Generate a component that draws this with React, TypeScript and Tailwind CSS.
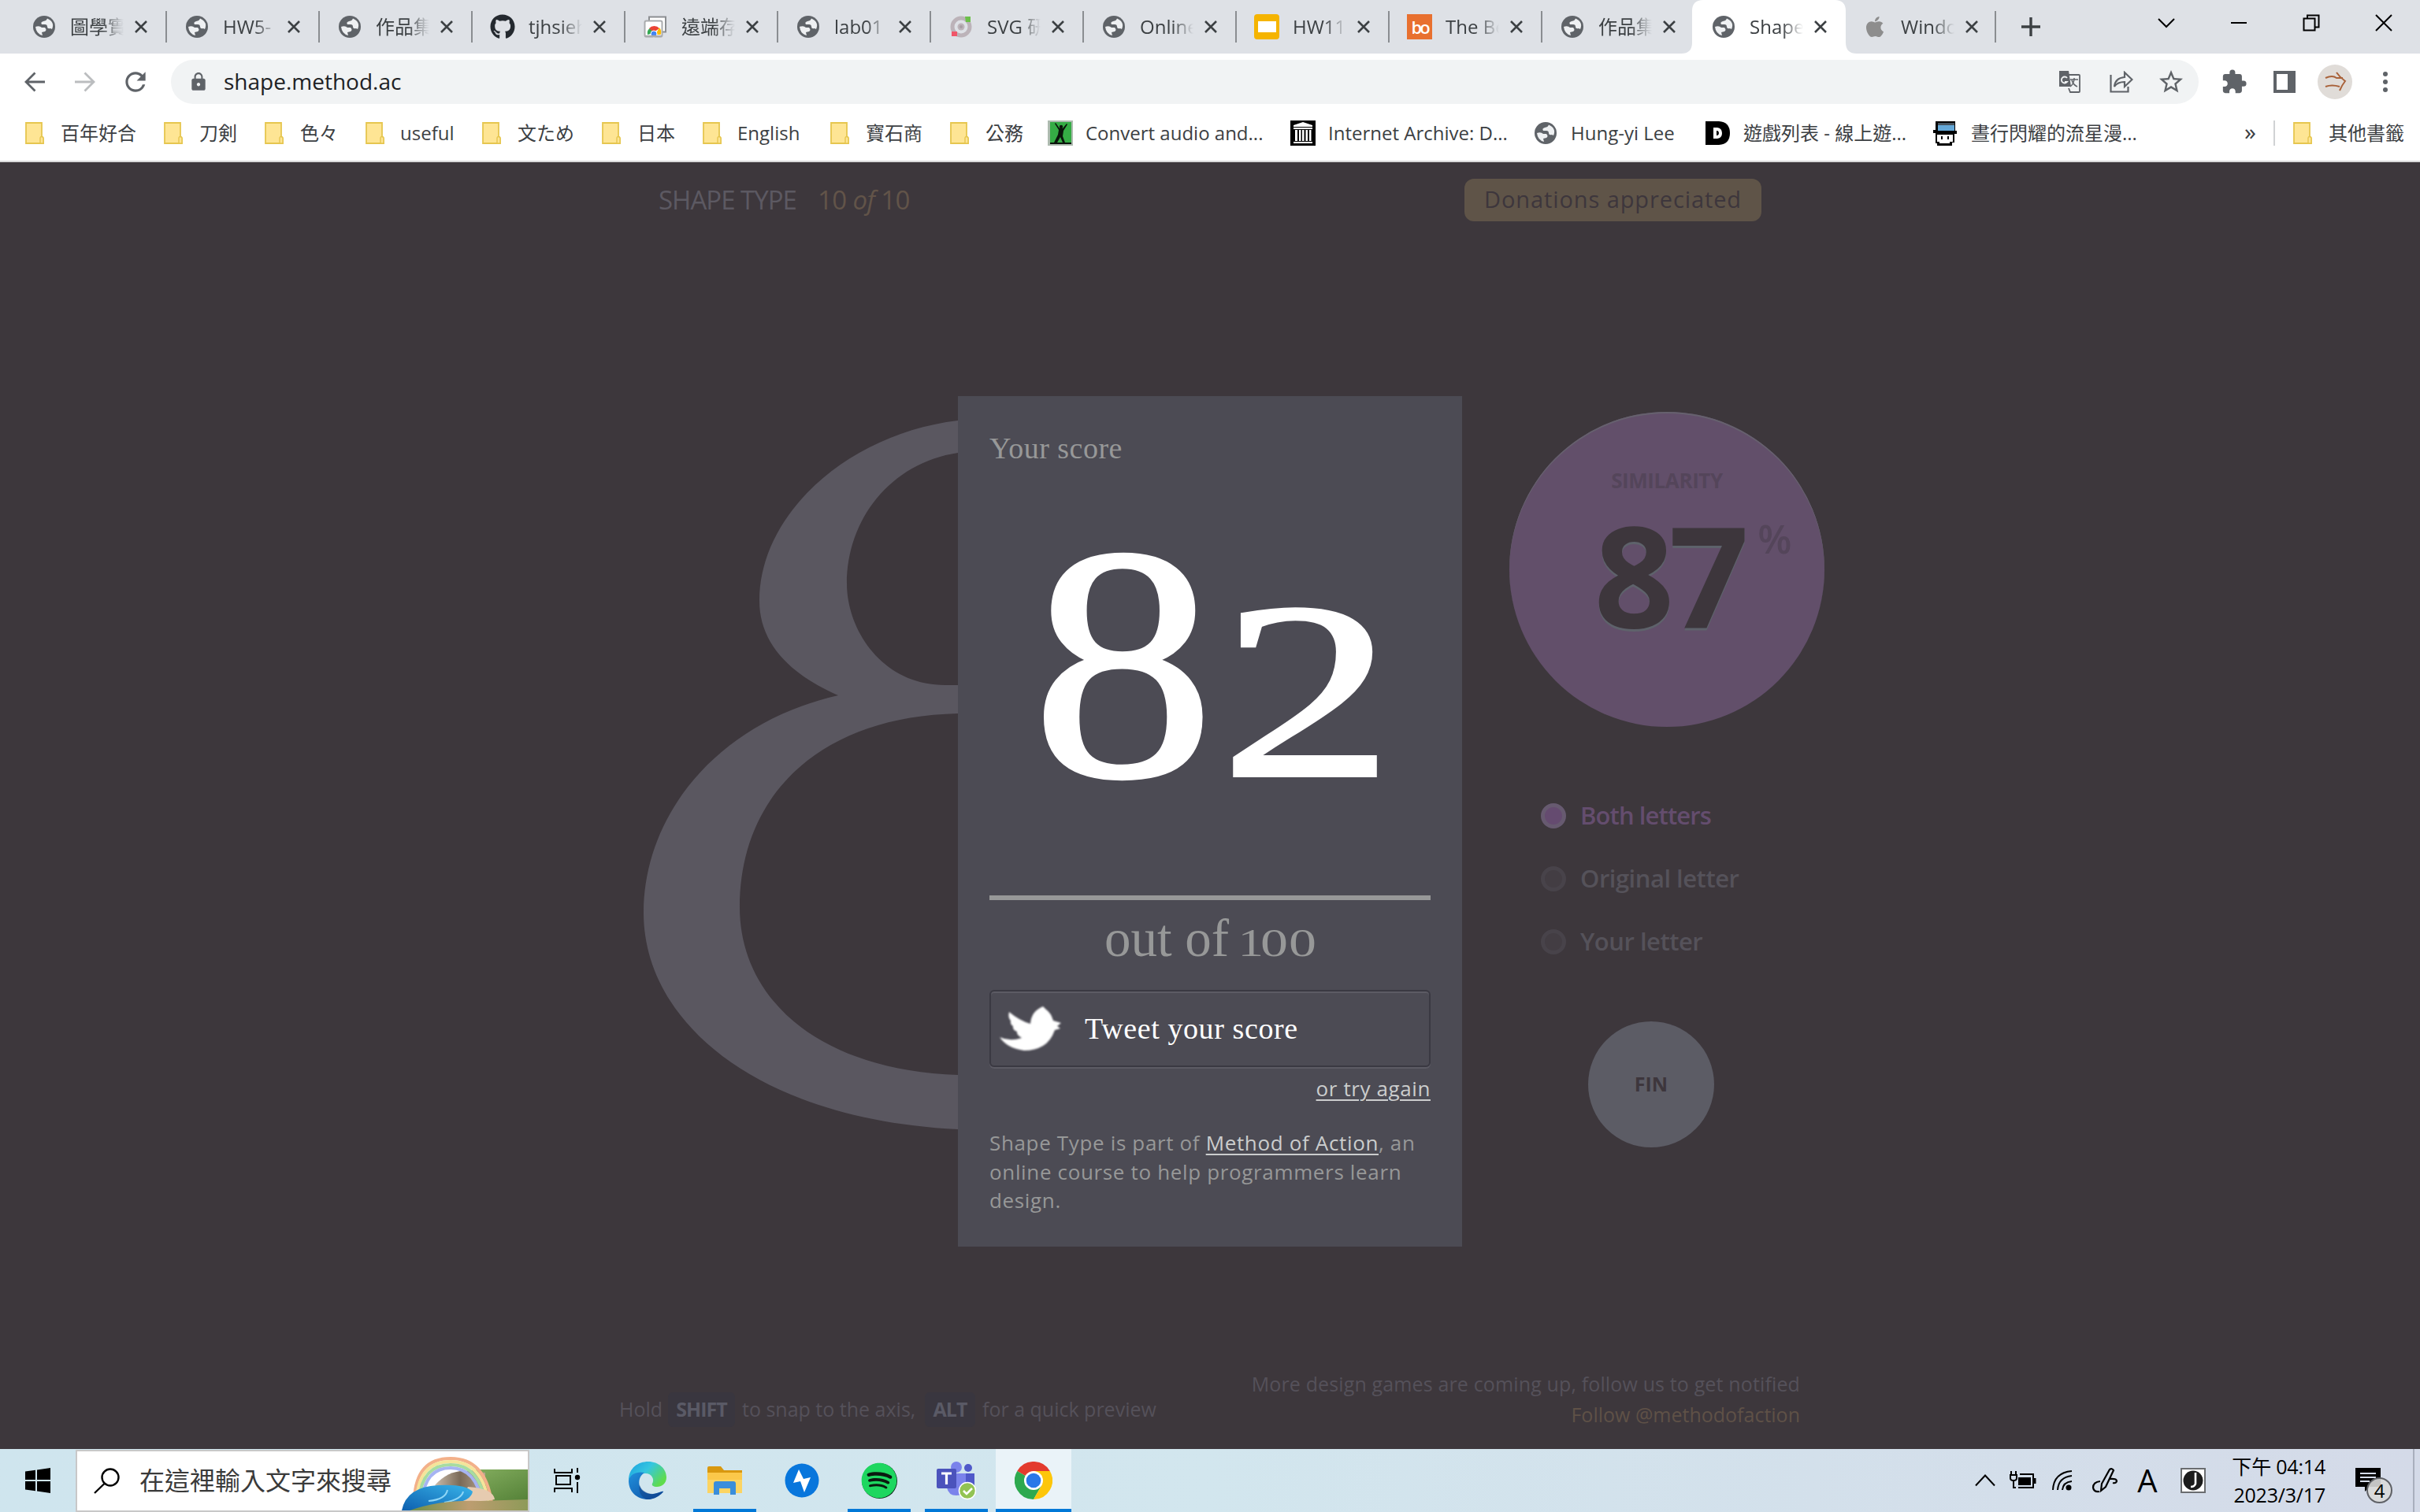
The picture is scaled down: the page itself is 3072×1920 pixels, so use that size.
import type { ReactNode } from "react";
import { FaApple, FaGithub, FaSpotify } from "react-icons/fa";
import { MdExtension, MdLock, MdRefresh, MdStarBorder } from "react-icons/md";

/* ---------- small icons ---------- */

const Globe = () => (
  <svg viewBox="0 0 28 28" className="size-[28px]">
    <circle cx="14" cy="14" r="14" fill="#5f6368" />
    <path d="M3 14q5-2 8 1h4q3 3 0 5l-4 1 1 4Q4 23 3 14z" fill="#eef0f2" />
    <path d="M18 3.500q-1 3-5 3.500-4 1-2 4h4q3 0 3 3t4 2l2 1q4-9-6-13.500z" fill="#eef0f2" />
  </svg>
);

const Cross = () => (
  <svg viewBox="0 0 16 16" className="size-[16px]" fill="none" stroke="#3c4043" strokeWidth="2.6">
    <path d="M1 1 15 15M15 1 1 15" />
  </svg>
);

const Folder = () => (
  <svg viewBox="0 0 24 28" className="h-[28px] w-[24px]">
    <path d="M1 1h20v17q2 1 2 3v6H1z" fill="#fee594" stroke="#e6c64f" strokeWidth="1.8" />
    <path d="M23 20q-3-3-4 0v7h4z" fill="#fee594" stroke="#e6c64f" strokeWidth="1.4" />
  </svg>
);

const RemoteIcon = () => (
  <svg viewBox="0 0 30 28" className="h-[28px] w-[30px]">
    <path d="M7 6V1.5h21v19h-4" fill="#fff" stroke="#8b8e91" strokeWidth="2" />
    <rect x="1.5" y="6.500" width="22" height="20" rx="2" fill="#fff" stroke="#a9abad" strokeWidth="2" />
    <path d="M5 24a8.500 8.500 0 0 1 4-9l4 7z" fill="#34a853" />
    <path d="M7 16a8.500 8.500 0 0 1 13 0l-7 5z" fill="#ea4335" />
    <path d="M20 15a8.500 8.500 0 0 1 1.500 9H15z" fill="#fbbc05" />
    <circle cx="13" cy="23" r="4" fill="#4285f4" stroke="#fff" />
    <path d="M1.500 26h22" stroke="#a9abad" strokeWidth="2.500" />
  </svg>
);

const TargetIcon = () => (
  <svg viewBox="0 0 28 28" className="size-[28px]">
    <circle cx="14" cy="14" r="11" fill="none" stroke="#bcb3b9" strokeWidth="5" />
    <circle cx="14" cy="14" r="4.500" fill="#bcb3b9" />
    <circle cx="14" cy="14" r="2" fill="#a79da4" />
    <path d="M19 1h7v7h-6z" fill="#6cc04a" />
    <path d="M2 20h7v6H2z" fill="#f0566a" />
  </svg>
);

const SlidesIcon = () => (
  <div className="flex size-[32px] items-center justify-center rounded-[4px] bg-[#f5b400]">
    <div className="h-[14px] w-[23px] bg-white" />
  </div>
);

const BoIcon = () => (
  <div className="flex size-[32px] items-center justify-center bg-[#e8702f] font-['Open_Sans',sans-serif] text-[22px] leading-none font-semibold tracking-[-3px] text-white">
    bo
  </div>
);

const AudioIcon = () => (
  <svg viewBox="0 0 32 32" className="size-[32px]">
    <path d="M0 0h32v32H0z" fill="#aebbb0" />
    <path d="M3 2h27v28H3z" fill="#35ac45" />
    <path d="M3 28h27v2H3zM15 10q2-1 4 0l5-6 1 1-5 8-1 7 3 8h-3l-3-7-4 7H8l5-10 1-6-5-8 1-1z" fill="#0a140b" />
    <circle cx="17" cy="8" r="2.200" fill="#0a140b" />
  </svg>
);

const ArchiveIcon = () => (
  <svg viewBox="0 0 32 32" className="size-[32px]">
    <path d="M0 0h32v32H0z" fill="#000" />
    <path d="M16 2 28 6v2H4V6zM4 9h24v2H4zM4 27h24v2H4zM6 12h3v14H6zM11 12h2.500v14H11zM15 12h2.500v14H15zM19.500 12H22v14h-2.500zM24 12h2.500v14H24z" fill="#fff" />
  </svg>
);

const DIcon = () => (
  <svg viewBox="0 0 31 30" className="h-[30px] w-[31px]">
    <path d="M0 0h17q14 1 14 15T17 30H0z" fill="#000" />
    <path d="M10 8h5q6 1 6 7t-6 7h-5z" fill="#fff" />
    <path d="M14 12h1q2 .5 2 3t-2 3h-1z" fill="#000" />
  </svg>
);

const MinerIcon = () => (
  <svg viewBox="0 0 32 32" className="size-[32px]">
    <path d="M4 1h25v12h2v4h-3v11h-3v4H6v-3H4V16H1v-4h3z" fill="#000" />
    <path d="M7 3h21v10H7z" fill="#64a8d8" />
    <path d="M7 3h21v3H7z" fill="#46535e" />
    <path d="M6 18h20v9h-4v2H9v-2H6z" fill="#fff" />
    <path d="M11 20h2v4h-2zM19 20h2v4h-2z" fill="#000" />
  </svg>
);

/* ---------- browser ---------- */

type Tab = { title: string; icon: ReactNode; width: string; active?: boolean; bare?: boolean };

const tabs: Tab[] = [
  { title: "圖學實", icon: <Globe />, width: "w-[194px]" },
  { title: "HW5-", icon: <Globe />, width: "w-[194px]" },
  { title: "作品集", icon: <Globe />, width: "w-[194px]" },
  { title: "tjhsieh", icon: <FaGithub className="size-[32px] text-[#24292f]" />, width: "w-[194px]" },
  { title: "遠端存", icon: <RemoteIcon />, width: "w-[194px]" },
  { title: "lab01", icon: <Globe />, width: "w-[194px]" },
  { title: "SVG 研", icon: <TargetIcon />, width: "w-[194px]" },
  { title: "Online", icon: <Globe />, width: "w-[194px]" },
  { title: "HW11", icon: <SlidesIcon />, width: "w-[194px]" },
  { title: "The Be", icon: <BoIcon />, width: "w-[194px]" },
  { title: "作品集", icon: <Globe />, width: "w-[192px]", bare: true },
  { title: "Shape", icon: <Globe />, width: "w-[192px]", active: true },
  { title: "Windo", icon: <FaApple className="size-[30px] text-[#8d8d8d]" />, width: "w-[192px]" },
];

function TabItem({ tab }: { tab: Tab }) {
  return (
    <div className={`relative flex h-[68px] shrink-0 items-center ${tab.width}`}>
      {tab.active && (
        <svg viewBox="0 0 223 68" className="absolute top-0 left-[-16px] h-[68px] w-[223px]">
          <path d="M0 68q14 0 14-14V14Q14 0 28 0h167q14 0 14 14v40q0 14 14 14z" fill="#fff" />
        </svg>
      )}
      <div className="relative ml-[20px] flex w-[36px] justify-center">{tab.icon}</div>
      <div className="relative ml-[15px] w-[68px] overflow-hidden text-[24px] whitespace-nowrap text-[#3c4043] [mask-image:linear-gradient(to_right,#000_60%,transparent)]">
        {tab.title}
      </div>
      <div className="relative ml-[14px]">
        <Cross />
      </div>
      {!tab.active && !tab.bare && <div className="ml-auto h-[40px] w-[2px] bg-[#8a8d91]" />}
    </div>
  );
}

type Bookmark = { label: string; icon: ReactNode; width: string; gap: string };

const bookmarks: Bookmark[] = [
  { label: "百年好合", icon: <Folder />, width: "w-[176px]", gap: "gap-[21px]" },
  { label: "刀剣", icon: <Folder />, width: "w-[128px]", gap: "gap-[21px]" },
  { label: "色々", icon: <Folder />, width: "w-[128px]", gap: "gap-[21px]" },
  { label: "useful", icon: <Folder />, width: "w-[148px]", gap: "gap-[20px]" },
  { label: "文ため", icon: <Folder />, width: "w-[152px]", gap: "gap-[21px]" },
  { label: "日本", icon: <Folder />, width: "w-[128px]", gap: "gap-[21px]" },
  { label: "English", icon: <Folder />, width: "w-[162px]", gap: "gap-[20px]" },
  { label: "寶石商", icon: <Folder />, width: "w-[152px]", gap: "gap-[21px]" },
  { label: "公務", icon: <Folder />, width: "w-[124px]", gap: "gap-[21px]" },
  { label: "Convert audio and...", icon: <AudioIcon />, width: "w-[308px]", gap: "gap-[16px]" },
  { label: "Internet Archive: D...", icon: <ArchiveIcon />, width: "w-[310px]", gap: "gap-[16px]" },
  { label: "Hung-yi Lee", icon: <Globe />, width: "w-[217px]", gap: "gap-[18px]" },
  { label: "遊戲列表 - 線上遊...", icon: <DIcon />, width: "w-[288px]", gap: "gap-[17px]" },
  { label: "晝行閃耀的流星漫...", icon: <MinerIcon />, width: "w-[300px]", gap: "gap-[17px]" },
];

function Browser() {
  return (
    <header className="h-[206px] bg-white font-['Open_Sans','Noto_Sans_CJK_TC',sans-serif]">
      <div className="flex h-[68px] bg-[#dee1e6] pl-[18px]">
        {tabs.map((t, i) => (
          <TabItem key={i} tab={t} />
        ))}
        <svg viewBox="0 0 24 24" className="mt-[22px] ml-[32px] size-[24px] shrink-0" stroke="#3c4043" strokeWidth="3.400">
          <path d="M12 0v24M0 12h24" />
        </svg>
        <div className="mr-[35px] ml-auto flex h-[58px] items-center gap-[70px]">
          <svg viewBox="0 0 22 22" className="size-[22px]" fill="none" stroke="#000" strokeWidth="2">
            <path d="m1 6 10 10L21 6" />
          </svg>
          <svg viewBox="0 0 22 22" className="size-[22px]" stroke="#000" strokeWidth="2">
            <path d="M1 11h20" />
          </svg>
          <svg viewBox="0 0 22 22" className="size-[22px]" fill="none" stroke="#000" strokeWidth="2">
            <path d="M1.500 5.500h14v15h-14zM6 5V1.500h14.500v15H16" />
          </svg>
          <svg viewBox="0 0 22 22" className="size-[22px]" stroke="#000" strokeWidth="2">
            <path d="M1 1 21 21M21 1 1 21" />
          </svg>
        </div>
      </div>

      <div className="flex h-[72px] items-center">
        <svg viewBox="0 0 26 26" className="ml-[31px] size-[26px]" fill="none" stroke="#5f6368" strokeWidth="2.800">
          <path d="M26 13H2M13.500 1.500 2 13l11.500 11.500" />
        </svg>
        <svg viewBox="0 0 26 26" className="ml-[38px] size-[26px]" fill="none" stroke="#bbbdbf" strokeWidth="2.800">
          <path d="M0 13h24M12.500 1.500 24 13 12.500 24.500" />
        </svg>
        <MdRefresh className="ml-[32px] size-[38px] text-[#5f6368]" />
        <div className="ml-[26px] flex h-[56px] w-[2574px] items-center rounded-[28px] bg-[#f1f3f4]">
          <MdLock className="ml-[22px] size-[26px] text-[#5f6368]" />
          <span className="ml-[19px] pb-[2px] text-[28px] text-[#202124]">shape.method.ac</span>
          <svg viewBox="0 0 28 28" className="ml-auto size-[28px]">
            <path d="M1 0h12l3 20H1z" fill="#5f6368" />
            <path d="M12 5h14q1 0 1 1v20q0 1-1 1H15l-2-5" fill="none" stroke="#5f6368" strokeWidth="1.800" />
            <path d="M11 9a4 4 0 1 0 0 5H8" fill="none" stroke="#f1f3f4" strokeWidth="1.800" />
            <path d="M15 11h10M20 9v2q-1 6-5 9M17 12q2 6 7 8" fill="none" stroke="#5f6368" strokeWidth="1.500" />
          </svg>
          <svg viewBox="0 0 30 28" className="ml-[37px] h-[28px] w-[30px]" fill="none" stroke="#5f6368" strokeWidth="2.200">
            <path d="M1.500 5v21.500h22V20M6 20q1-11 13-12V2l9.500 9-9.500 9v-6Q10 14 6 20z" />
          </svg>
          <MdStarBorder className="mr-[17px] ml-[30px] size-[36px] text-[#5f6368]" />
        </div>
        <MdExtension className="ml-[28px] size-[34px] text-[#5f6368]" />
        <div className="ml-[33px] flex h-[28px] w-[28px] items-center bg-[#5f6368] pl-[4px]">
          <div className="h-[20px] w-[14px] bg-white" />
        </div>
        <div className="ml-[28px] flex size-[44px] items-center justify-center rounded-full bg-[#e0dcd8]">
          <svg viewBox="0 0 30 26" className="h-[26px] w-[30px]" fill="none" stroke="#a9623a" strokeWidth="2">
            <path d="M3 8q9-4 14 0h8M3 19q8-3 18 0M17 1q4 6 11 11-4 5-7 12" />
          </svg>
        </div>
        <svg viewBox="0 0 8 28" className="ml-[38px] h-[28px] w-[8px]" fill="#5f6368">
          <circle cx="4" cy="4" r="3" />
          <circle cx="4" cy="14" r="3" />
          <circle cx="4" cy="24" r="3" />
        </svg>
      </div>

      <div className="flex h-[66px] items-center border-b-2 border-[#d9d9da] pb-[7px] pl-[32px] text-[24px] whitespace-nowrap text-[#3c4043]">
        {bookmarks.map((b) => (
          <div key={b.label} className={`flex shrink-0 items-center ${b.width} ${b.gap}`}>
            {b.icon}
            <span>{b.label}</span>
          </div>
        ))}
        <span className="ml-[96px] w-[37px] pb-[4px] text-[30px]">»</span>
        <div className="h-[32px] w-[2px] bg-[#d0d2d4]" />
        <div className="ml-[23px] flex items-center gap-[21px]">
          <Folder />
          <span>其他書籤</span>
        </div>
      </div>
    </header>
  );
}

/* ---------- game page ---------- */

const choices = [
  { label: "Both letters", ring: "border-[#675a70] bg-[#654b70]", text: "text-[#644d6e] tracking-[-0.9px]" },
  { label: "Original letter", ring: "border-[#48434a] bg-[#433d43]", text: "text-[#55525a] tracking-[-0.5px]" },
  { label: "Your letter", ring: "border-[#48434a] bg-[#433d43]", text: "text-[#55525a] tracking-[-0.5px]" },
];

function ScoreCard() {
  return (
    <section className="absolute top-[297px] left-[1216px] h-[1080px] w-[640px] bg-[#4c4b54] px-[40px] pt-[46px]">
      <h2 className="h-[40px] font-['Liberation_Serif',serif] text-[38px] leading-[40px] tracking-[0.5px] text-[#979898]">Your score</h2>
      <div className="flex h-[554px] items-baseline border-b-[6px] border-[#979898] pt-[42px] pl-[64px] font-['Liberation_Serif',serif] text-white [-webkit-text-stroke:4px_white]">
        <span className="w-[211px] scale-x-[1.1] text-[423px] leading-none">8</span>
        <span className="ml-[48px] w-[160px] scale-x-[1.38] text-[320px] leading-none">2</span>
      </div>
      <div className="mt-[8px] flex h-[80px] items-baseline justify-center font-['Liberation_Serif',serif] text-[67px] leading-[80px] text-[#979898]">
        <span className="-ml-[4px]">out of</span>
        <span className="ml-[15px] w-[23px] scale-x-[1.3] text-[50px]">1</span>
        <span className="ml-[7px] w-[25px] scale-x-[1.4] text-[50px]">0</span>
        <span className="ml-[11px] w-[25px] scale-x-[1.4] text-[50px]">0</span>
      </div>
      <a className="mt-[26px] flex h-[98px] items-center rounded-[6px] border-2 border-[#3a3942] font-['Liberation_Serif',serif] text-[38px] tracking-[0.6px] text-white shadow-[inset_0_2px_0_#5c5b64,0_2px_0_#5c5b64]">
        <svg viewBox="0 0 84 64" className="ml-[6px] h-[64px] w-[84px] blur-[0.8px]" fill="#fff">
          <path d="M5 43Q18 49 33 44 26 40 27 36 21 34 22 29 18 27 19 22 15 18 17 11 30 22 44 26 45 10 60 4L64 8Q70 12 73 22L83 25 78 29 82 32 75 34Q70 48 60 54 50 60 36 60 14 57 5 43z" />
        </svg>
        <span className="ml-[29px]">Tweet your score</span>
      </a>
      <div className="mt-[9px] text-right text-[26px] leading-[36px] tracking-[0.6px] text-[#cbcdcd]">
        <a className="underline decoration-2 underline-offset-[4px]">or try again</a>
      </div>
      <p className="mt-[33px] text-[26px] leading-[36.5px] tracking-[0.650px] whitespace-nowrap text-[#979898]">
        Shape Type is part of{" "}
        <a className="text-[#cbcdcd] underline decoration-2 underline-offset-[4px]">Method of Action</a>, an
        <br />
        online course to help programmers learn
        <br />
        design.
      </p>
    </section>
  );
}

function Game() {
  return (
    <main className="relative h-[1634px] bg-[#3d373c] pt-[21px] font-['Open_Sans',sans-serif]">
      <div className="flex h-[54px] items-center whitespace-nowrap">
        <h1 className="ml-[836px] w-[202px] text-[33px] tracking-[-1px] text-[#5c5962]">SHAPE TYPE</h1>
        <div className="w-[821px] text-[33px] tracking-[-0.600px] text-[#625449]">
          10 <i>of</i> 10
        </div>
        <a className="flex h-[54px] w-[377px] items-center justify-center rounded-[12px] bg-[#5f5448] pb-[2px] text-[29px] tracking-[0.9px] text-[#3d363c]">
          Donations appreciated
        </a>
      </div>

      <div className="mt-[242px] flex h-[934px] items-start">
        <svg viewBox="817 523 483 920" className="ml-[817px] h-[920px] w-[483px]" fill="#5a5760">
          <path
            fillRule="evenodd"
            d="M1300 528 1216 534C1080 550 964 650 964 763 964 815 1000 855 1064 883 910 918 817 1035 817 1159 817 1300 965 1422 1216 1434H1300V1365H1216C1030 1358 939 1262 939 1152 939 1010 1040 910 1216 906H1300V870H1200C1120 870 1075 800 1075 741 1075 660 1130 588 1216 575L1300 570z"
          />
        </svg>
        <div className="ml-[616px]">
          <div className="flex size-[400px] flex-col items-center rounded-full bg-[#624f6a] pt-[69px] shadow-[inset_0_2px_0_#66616e]">
            <div className="h-[36px] text-[26px] leading-[36px] font-bold tracking-[-0.4px] text-[#54455a]">SIMILARITY</div>
            <div className="flex pl-[66px] font-bold">
              <span className="h-[200px] text-[178px] leading-[200px] tracking-[-7px] text-[#3d363c] [text-shadow:0_3px_0_#5e626b]">87</span>
              <span className="ml-[18px] text-[50px] leading-[113px] font-semibold text-[#54455a]">%</span>
            </div>
          </div>
          <div className="mt-[73px] ml-[40px]">
            {choices.map((c) => (
              <div key={c.label} className="flex h-[80px] items-center">
                <div className={`size-[32px] rounded-full border-[5px] ${c.ring}`} />
                <span className={`ml-[18px] pb-[2px] text-[31px] font-semibold whitespace-nowrap ${c.text}`}>{c.label}</span>
              </div>
            ))}
          </div>
          <div className="mt-[61px] ml-[100px] flex size-[160px] items-center justify-center rounded-full bg-[#5c5c65] text-[25px] font-bold text-[#3d363c]">
            FIN
          </div>
        </div>
      </div>

      <div className="mt-[280px] ml-[786px] flex w-[1499px] items-start justify-between text-[25px] whitespace-nowrap text-[#55515a]">
        <div className="mt-[31px] flex h-[44px] items-center">
          <span className="w-[62px]">Hold</span>
          <b className="flex h-[44px] w-[85px] items-center justify-center rounded-[6px] bg-[#39363f] tracking-[-1px] text-[#5a5a66]">SHIFT</b>
          <span className="ml-[9px] w-[232px]">to snap to the axis,</span>
          <b className="flex h-[44px] w-[64px] items-center justify-center rounded-[6px] bg-[#39363f] tracking-[-1px] text-[#5a5a66]">ALT</b>
          <span className="ml-[9px]">for a quick preview</span>
        </div>
        <div className="pt-[1px] text-right leading-[39px] tracking-[0.14px]">
          <div>More design games are coming up, follow us to get notified</div>
          <div className="tracking-normal text-[#5f5147]">Follow @methodofaction</div>
        </div>
      </div>
      <ScoreCard />
    </main>
  );
}

/* ---------- taskbar ---------- */

function Illustration() {
  return (
    <svg viewBox="0 0 160 76" className="ml-auto h-[76px] w-[160px] shrink-0">
      <defs>
        <linearGradient id="hill" x1="0" y1="0" x2="1" y2="1">
          <stop offset="0" stopColor="#8fb868" />
          <stop offset="1" stopColor="#4f7c33" />
        </linearGradient>
        <linearGradient id="rock" x1="0" y1="0" x2="1" y2="0">
          <stop offset="0" stopColor="#cbbcab" />
          <stop offset="0.5" stopColor="#7a6a58" />
          <stop offset="1" stopColor="#b7a48f" />
        </linearGradient>
        <linearGradient id="water" x1="0" y1="1" x2="1" y2="0">
          <stop offset="0" stopColor="#0d5fae" />
          <stop offset="1" stopColor="#38b4ea" />
        </linearGradient>
        <linearGradient id="sand" x1="0" y1="0" x2="1" y2="0">
          <stop offset="0" stopColor="#6d8f47" />
          <stop offset="0.5" stopColor="#bd9d70" />
          <stop offset="1" stopColor="#8e9a58" />
        </linearGradient>
      </defs>
      <path d="M160 24H96Q70 26 50 44L60 72h100z" fill="url(#hill)" />
      <path d="M42 44Q60 24 84 26l22 2 0 30H60z" fill="url(#rock)" />
      <path d="M16 62Q18 10 62 10t52 56" fill="none" stroke="#f3b089" strokeWidth="4" />
      <path d="M19 62Q22 14 62 14t48 52" fill="none" stroke="#f5e49a" strokeWidth="4" />
      <path d="M22 62Q26 18 62 18t44 48" fill="none" stroke="#a7dca0" strokeWidth="4" />
      <path d="M26 62Q30 22 62 22t40 44" fill="none" stroke="#a6b4f2" strokeWidth="4" />
      <path d="M84 46q32 2 34 16l-46 8z" fill="#e6cbb0" />
      <path d="M0 76Q6 46 46 44q34-2 44 8-2 12-26 15L20 76z" fill="url(#water)" />
      <path d="M34 64q22-2 24-14M54 66q22-4 24-14" fill="none" stroke="#8fd6f6" strokeWidth="2" />
      <path d="M10 76Q50 62 100 64l60-2v14z" fill="url(#sand)" />
    </svg>
  );
}

function TaskSlot({ width, line, children, bg }: { width: string; line?: boolean; bg?: string; children: ReactNode }) {
  return (
    <div className={`relative flex h-[80px] shrink-0 items-center justify-center ${width} ${bg ?? ""}`}>
      {children}
      {line && <div className="absolute inset-x-0 bottom-0 h-[4px] bg-[#0078d7]" />}
    </div>
  );
}

function Taskbar() {
  return (
    <footer className="flex h-[80px] items-center bg-linear-to-r from-[#cfe5ee] via-[#d2e6ee] to-[#d4dae8] font-['Open_Sans','Noto_Sans_CJK_TC',sans-serif]">
      <svg viewBox="0 0 32 32" className="ml-[32px] size-[32px]" fill="#000">
        <path d="M0 4.500 13 2.700V15H0zM15 2.400 32 0v15H15zM0 17h13v12.300L0 27.500zM15 17h17v15l-17-2.400z" />
      </svg>
      <div className="ml-[32px] flex h-[79px] w-[576px] items-center border-2 border-[#c8c8c8] bg-white">
        <svg viewBox="0 0 34 34" className="ml-[21px] size-[34px] shrink-0" fill="none" stroke="#000" strokeWidth="2.400">
          <circle cx="21" cy="13" r="10.500" />
          <path d="M14 20.500 1 33" />
        </svg>
        <span className="ml-[24px] w-[320px] shrink-0 text-[32px] whitespace-nowrap text-[#3a3a3a]">在這裡輸入文字來搜尋</span>
        <Illustration />
      </div>
      <svg viewBox="0 0 34 32" className="ml-[31px] h-[32px] w-[34px]" fill="none" stroke="#000" strokeWidth="2">
        <path d="M1 1v5h22V1M1 31v-5h22v5M3 10h18v11H3zM30 0v6M30 18v14" />
        <circle cx="30" cy="12" r="3.200" fill="#000" stroke="none" />
      </svg>

      <TaskSlot width="w-[80px] ml-[45px]">
        <svg viewBox="0 0 48 48" className="size-[48px]">
          <defs>
            <linearGradient id="eTop" x1="0" y1="0" x2="1" y2="0.600">
              <stop offset="0" stopColor="#1a9fe0" />
              <stop offset="0.500" stopColor="#35c6e0" />
              <stop offset="1" stopColor="#5fdc4c" />
            </linearGradient>
            <linearGradient id="eLow" x1="0" y1="0" x2="1" y2="1">
              <stop offset="0" stopColor="#2190dc" />
              <stop offset="1" stopColor="#0c4ca0" />
            </linearGradient>
          </defs>
          <path d="M0 24C0 8 12 0 25 0c13 0 23 9 23 20 0 8-6 12-12 12-5 0-7-2-6-4 3-5 0-13-9-13C10 15 2 20 0 24z" fill="url(#eTop)" />
          <path d="M0 24c2-9 12-12 20-10-6 4-8 11-6 17 3 9 14 12 22 9 4-1 7-3 8-2 1 0-8 10-19 10C10 48 0 38 0 24z" fill="url(#eLow)" />
          <path d="M14 30c3 9 14 13 22 10l8-2c-1 1-9 10-20 10-8-2-12-10-10-18z" fill="#123f86" opacity="0.500" />
        </svg>
      </TaskSlot>
      <TaskSlot width="w-[80px] ml-[18px]" line>
        <svg viewBox="0 0 44 36" className="h-[36px] w-[44px]">
          <path d="M0 2q0-2 2-2h15l4 5H44v8H0z" fill="#d9980f" />
          <path d="M0 8h44v26H0z" fill="#fcd462" />
          <path d="M0 8h44v9H0z" fill="#fbc84a" />
          <path d="M8 36V22q0-3 3-3h22q3 0 3 3v14h-7v-8H15v8z" fill="#3a8edb" />
        </svg>
      </TaskSlot>
      <TaskSlot width="w-[80px] ml-[18px]">
        <svg viewBox="0 0 44 44" className="size-[44px]">
          <circle cx="22" cy="22" r="21.500" fill="#0876dc" />
          <path d="M18 8 11 25l9-2 5 14 8-19-9 2z" fill="#fff" />
        </svg>
      </TaskSlot>
      <TaskSlot width="w-[80px] ml-[18px]" line>
        <div className="flex size-[45px] items-center justify-center rounded-full bg-[#0b1a10]">
          <FaSpotify className="size-[46px] shrink-0 text-[#1ed760]" />
        </div>
      </TaskSlot>
      <TaskSlot width="w-[80px] ml-[18px]" line>
        <svg viewBox="0 0 50 48" className="size-[50px]">
          <circle cx="25" cy="7" r="7" fill="#7b83eb" />
          <circle cx="40" cy="8" r="5" fill="#5059c9" />
          <path d="M36 15h12v14q0 7-8 7h-4z" fill="#5059c9" />
          <path d="M13 15h24v18q-2 10-12 10T13 33z" fill="#7b83eb" />
          <rect x="0" y="9" width="25" height="25" rx="2" fill="#4b53bc" />
          <path d="M6 15h13M12.500 15v14" stroke="#fff" strokeWidth="3.200" />
          <circle cx="39" cy="37" r="10.500" fill="#92c353" stroke="#fff" strokeWidth="1.500" />
          <path d="m34 37 4 4 7-7" fill="none" stroke="#fff" strokeWidth="2.600" />
        </svg>
      </TaskSlot>
      <TaskSlot width="w-[96px] ml-[10px]" bg="bg-[#eaf3f8]" line>
        <svg viewBox="0 0 48 48" className="size-[48px]">
          <path d="M24 24 3.200 12A24 24 0 0 1 44.800 12z" fill="#e33b2e" />
          <path d="M24 24 3.200 12A24 24 0 0 0 24 48L34.400 30z" fill="#2da94f" />
          <path d="M24 12h20.800A24 24 0 0 1 24 48l10.400-18z" fill="#fdc60a" />
          <circle cx="24" cy="24" r="12" fill="#fff" />
          <circle cx="24" cy="24" r="9.300" fill="#2a78e8" />
        </svg>
      </TaskSlot>

      <svg viewBox="0 0 26 16" className="ml-auto h-[16px] w-[26px]" fill="none" stroke="#000" strokeWidth="2">
        <path d="m1 14.500 12-13 12 13" />
      </svg>
      <svg viewBox="0 0 34 24" className="ml-[18px] h-[24px] w-[34px]" fill="none" stroke="#000" strokeWidth="2">
        <path d="M2 0v5M8 0v5M1 5h8v4q0 3-4 3t-4-3zM5 12v9h3M13 4h17v17H11" />
        <path d="M11 8h16v10H11z" fill="#000" stroke="none" />
        <path d="M32 9v7" strokeWidth="3" />
      </svg>
      <svg viewBox="0 0 26 26" className="ml-[20px] size-[26px]" fill="none" stroke="#000" strokeWidth="2">
        <path d="M1 25Q2 3 25 1M7 25Q8 9 25 7M13 25q1-10 12-11" />
        <circle cx="21" cy="22" r="3.500" fill="#000" stroke="none" />
      </svg>
      <svg viewBox="0 0 34 32" className="ml-[24px] h-[32px] w-[34px]" fill="none" stroke="#000" strokeWidth="2.200">
        <path d="M12 29 13 20 23 2q3-2 5 1L18 24zM11 17q-9 1-9 8 1 6 8 5M23 14q9-1 9 3-1 3-5 2" />
      </svg>
      <span className="ml-[24px] w-[26px] text-center font-['Open_Sans',sans-serif] text-[40px] leading-[40px]">A</span>
      <div className="ml-[29px] flex size-[32px] items-center justify-center border-2 border-[#6a6d70] bg-white">
        <svg viewBox="0 0 26 26" className="size-[26px]">
          <circle cx="13" cy="13" r="12.500" fill="#1b1b1b" />
          <path d="M16 3v14q-1 4-6 4" fill="none" stroke="#fff" strokeWidth="2.600" />
        </svg>
      </div>
      <div className="ml-[20px] w-[132px] text-right text-[25px] leading-[36px] tracking-[-0.200px] whitespace-nowrap text-black">
        <div>下午 04:14</div>
        <div>2023/3/17</div>
      </div>
      <div className="relative ml-[38px] h-[48px] w-[48px]">
        <svg viewBox="0 0 32 32" className="mt-[8px] size-[32px]">
          <path d="M0 0h32v24H18l-6 6v-6H0z" fill="#000" />
          <path d="M6 7h20M6 12h20M6 17h12" stroke="#d4dbe9" strokeWidth="2" />
        </svg>
        <div className="absolute top-[20px] left-[14px] flex size-[33px] items-center justify-center rounded-full border-2 border-[#5f6166] bg-[#d9d9d9]/90 text-[24px] leading-none">
          4
        </div>
      </div>
      <div className="mr-[7px] ml-[25px] h-[80px] w-[2px] bg-[#a9afbd]" />
    </footer>
  );
}

export default function App() {
  return (
    <div className="h-[1920px] w-[3072px] overflow-hidden">
      <Browser />
      <Game />
      <Taskbar />
    </div>
  );
}
